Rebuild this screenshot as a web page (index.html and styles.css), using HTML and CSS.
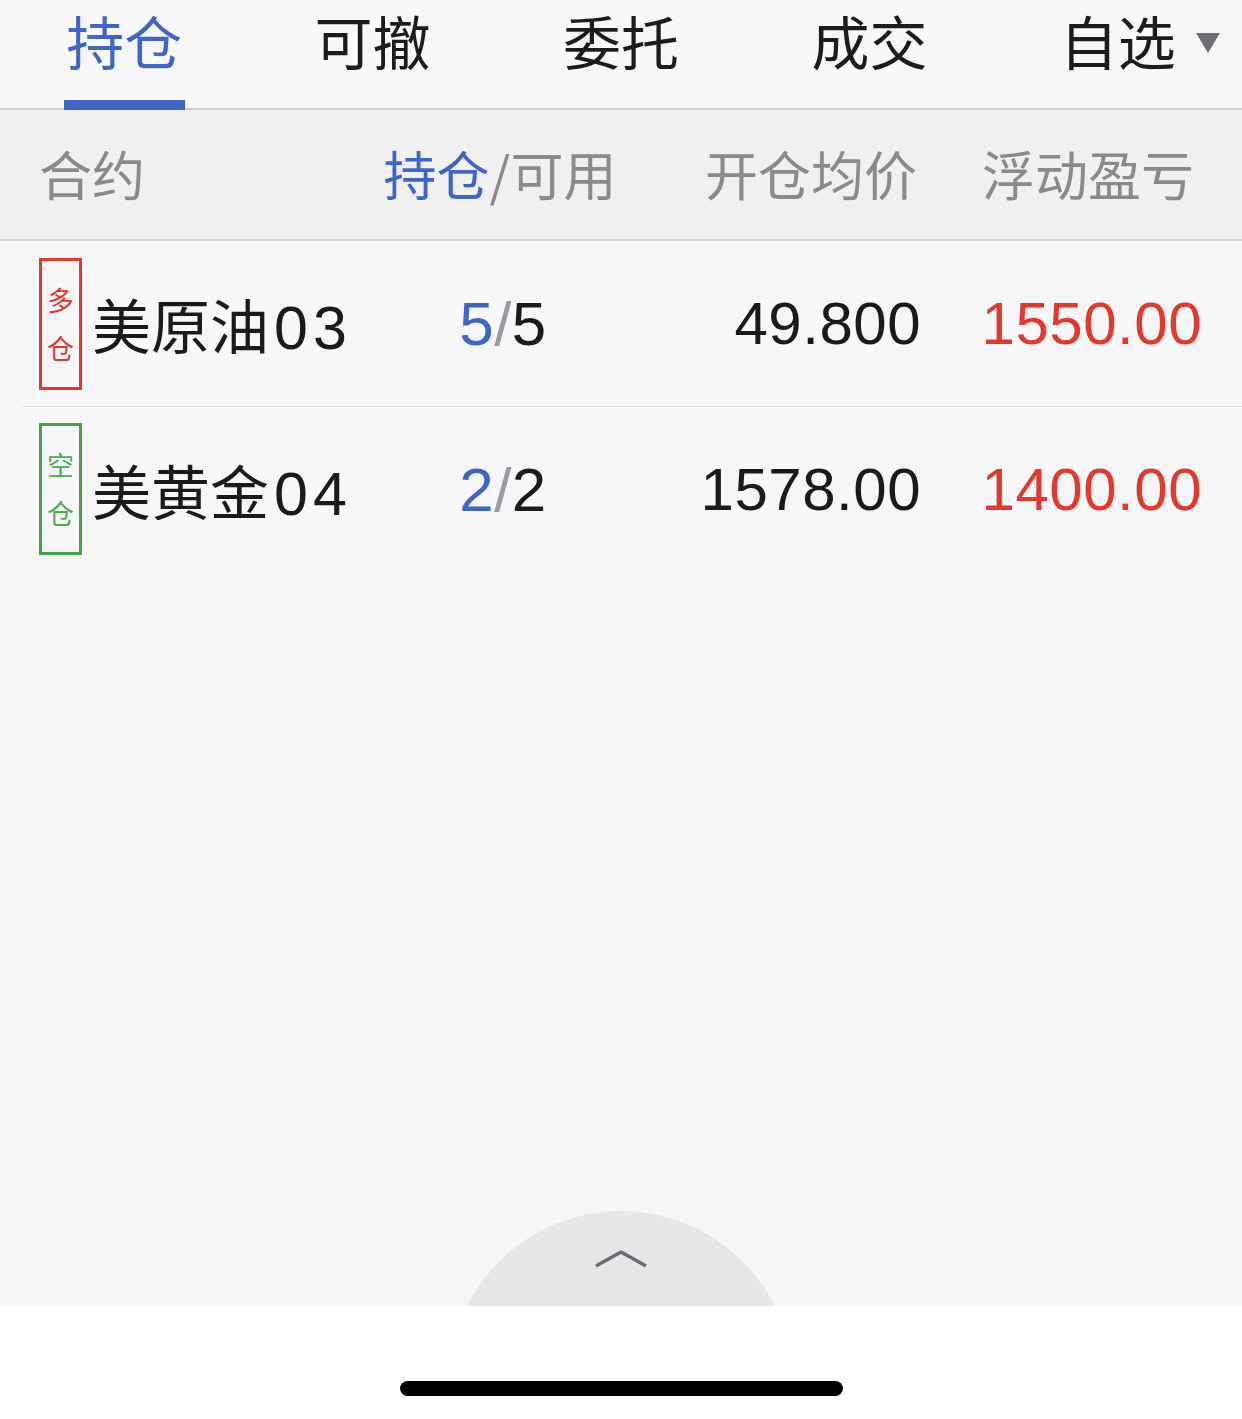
FILE: index.html
```html
<!DOCTYPE html>
<html lang="zh-CN">
<head>
  <meta charset="UTF-8">
  <title>持仓</title>
  <link rel="stylesheet" href="styles.css">
</head>
<body>
  <div class="tabs">
    <div class="tab active"><span class="tab-label">持仓</span></div>
    <div class="tab"><span class="tab-label">可撤</span></div>
    <div class="tab"><span class="tab-label">委托</span></div>
    <div class="tab"><span class="tab-label">成交</span></div>
    <div class="tab tab-menu"><span class="tab-label">自选</span><span class="caret"></span></div>
  </div>

  <main class="content">
    <div class="grid head">
      <div class="cell">合约</div>
      <div class="cell center"><span class="blue">持仓</span><span class="slash">/</span>可用</div>
      <div class="cell right price-head">开仓均价</div>
      <div class="cell right pnl-head">浮动盈亏</div>
    </div>

    <div class="rows">
      <div class="grid row">
        <div class="cell name">
          <span class="badge long">多<br>仓</span>
          <span class="title">美原油<span class="code">03</span></span>
        </div>
        <div class="cell center num"><span class="blue">5</span><span class="slash">/</span>5</div>
        <div class="cell right num">49.800</div>
        <div class="cell right num red">1550.00</div>
      </div>
      <div class="grid row">
        <div class="cell name">
          <span class="badge short">空<br>仓</span>
          <span class="title">美黄金<span class="code">04</span></span>
        </div>
        <div class="cell center num"><span class="blue">2</span><span class="slash">/</span>2</div>
        <div class="cell right num">1578.00</div>
        <div class="cell right num red">1400.00</div>
      </div>
    </div>

    <!-- pull-up button -->
    <div class="pull-up">
      <svg width="54" height="20" viewBox="0 0 54 20">
        <polyline points="2,17 27,3 52,17" fill="none" stroke="#6b6b70" stroke-width="3.5" stroke-linejoin="round"/>
      </svg>
    </div>
  </main>

  <footer class="home">
    <div class="home-bar"></div>
  </footer>
</body>
</html>
```

FILE: styles.css
```css
* {
  box-sizing: border-box;
}

html, body {
  margin: 0;
  height: 100%;
}

body {
  width: 1242px;
  height: 1419px;
  display: flex;
  flex-direction: column;
  background-color: #f7f7f9;
  color: #1a1a1a;
  font-family: "Liberation Sans", "Noto Sans CJK SC", sans-serif;
  overflow: hidden;
}

/* top tabs */
.tabs {
  display: grid;
  grid-template-columns: repeat(5, 1fr);
  height: 110px;
  background-color: #f8f8f8;
  border-bottom: 2px solid #cdcdd1;
}

.tab {
  position: relative;
  text-align: center;
}

.tab-label {
  display: inline-block;
  font-family: "Noto Sans CJK SC", sans-serif;
  font-size: 58px;
  line-height: 80px;
  color: #1c1c1c;
}

.tab.active .tab-label {
  color: #3f65c5;
}

.tab.active::after {
  content: "";
  position: absolute;
  left: 50%;
  bottom: -2px;
  width: 121px;
  height: 10px;
  margin-left: -60px;
  background-color: #3f65c5;
}

.caret {
  position: absolute;
  right: 22px;
  top: 33px;
  width: 0;
  height: 0;
  border-left: 12px solid transparent;
  border-right: 12px solid transparent;
  border-top: 20px solid #6e6e72;
}

/* content area */
.content {
  position: relative;
  flex: 1;
  overflow: hidden;
}

.grid {
  display: grid;
  grid-template-columns: 341px 240px 301px 281px;
  align-items: center;
}

.cell.center {
  text-align: center;
}

.cell.right {
  text-align: right;
}

.head {
  height: 131px;
  padding-left: 39px;
  padding-right: 40px;
  padding-bottom: 4px;
  background-color: #f0f0f1;
  border-bottom: 2px solid #d3d3d7;
  font-family: "Noto Sans CJK SC", sans-serif;
  font-size: 53px;
  color: #8a8a8e;
}

.price-head {
  margin-right: 4px;
}

.pnl-head {
  margin-right: 8px;
}

.blue {
  color: #3f65c5;
}

.slash {
  color: #9a9a9e;
}

.head .slash {
  color: #8a8a8e;
}

.row {
  height: 165px;
  padding-left: 39px;
  padding-right: 40px;
}

.row + .row {
  margin-left: 22px;
  padding-left: 17px;
  border-top: 1px solid #e2e2e6;
}

.name {
  display: flex;
  align-items: center;
}

.badge {
  width: 43px;
  height: 132px;
  display: flex;
  align-items: center;
  justify-content: center;
  border: 3px solid;
  font-family: "Noto Sans CJK SC", sans-serif;
  font-size: 27px;
  line-height: 48px;
  text-align: center;
}

.badge.long {
  border-color: #e2382d;
  color: #e2382d;
}

.badge.short {
  border-color: #47a046;
  color: #4fae4d;
}

.title {
  margin-left: 10px;
  font-family: "Noto Sans CJK SC", sans-serif;
  font-size: 59px;
  color: #1a1a1a;
}

.code {
  font-family: "Liberation Sans", sans-serif;
  font-size: 61px;
  letter-spacing: 5px;
  margin-left: 5px;
}

.num {
  font-size: 60px;
  letter-spacing: 0.5px;
  color: #1a1a1a;
}

.num.center {
  font-size: 62px;
  padding-left: 6px;
}

.num.red {
  color: #e2382d;
}

.pull-up {
  position: absolute;
  left: 449px;
  bottom: -249px;
  width: 344px;
  height: 344px;
  border-radius: 50%;
  background-color: #e6e6e9;
  text-align: center;
  padding-top: 38px;
}

/* home indicator */
.home {
  height: 113px;
  background-color: #ffffff;
  display: flex;
  justify-content: center;
  padding-top: 75px;
}

.home-bar {
  width: 443px;
  height: 15px;
  border-radius: 8px;
  background-color: #000;
}
```
